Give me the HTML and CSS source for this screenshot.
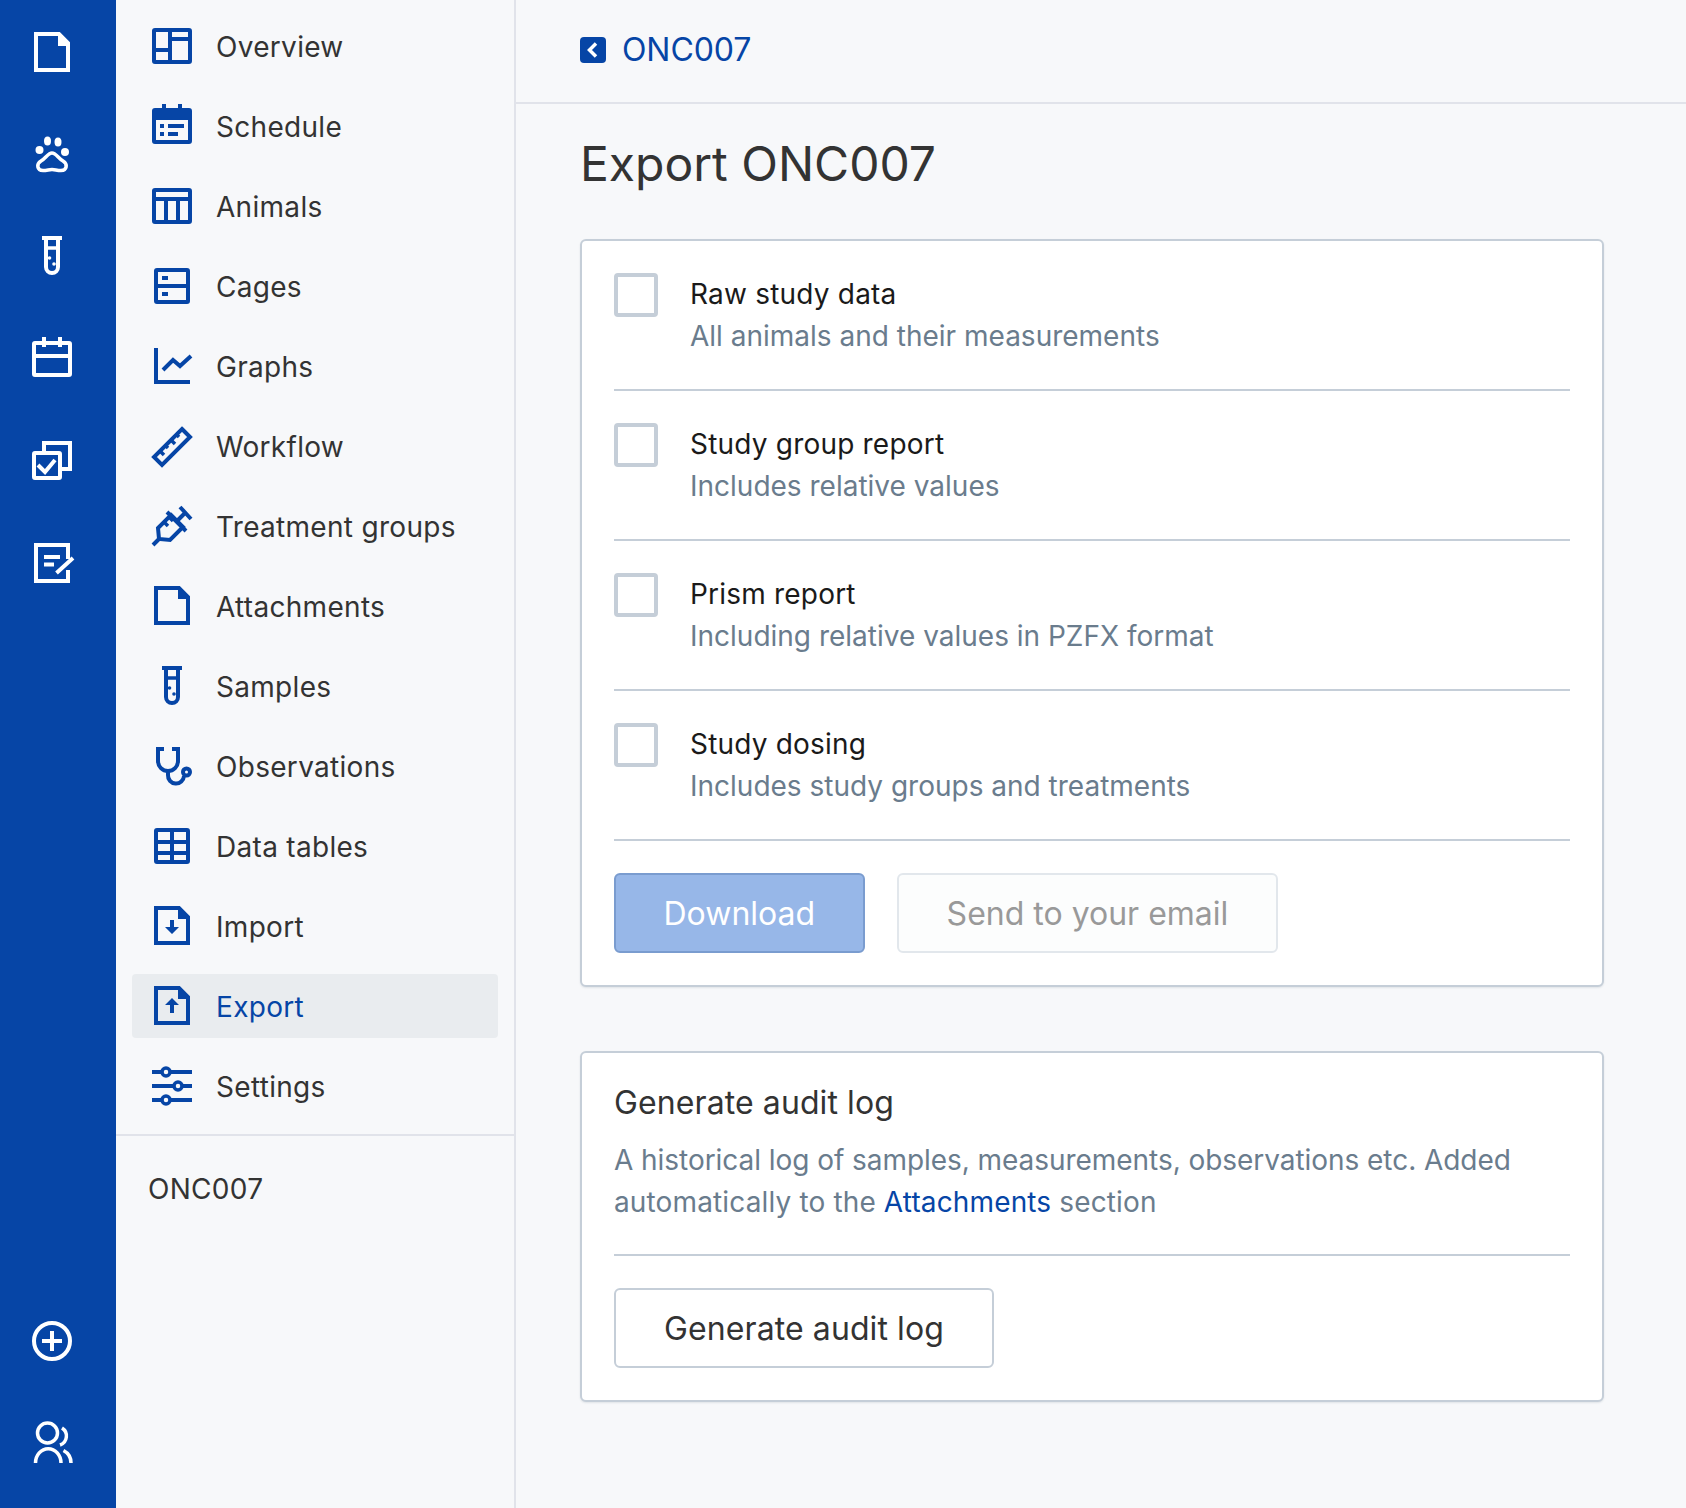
FILE: index.html
```html
<!DOCTYPE html>
<html lang="en">
  <head>
    <meta charset="UTF-8" />
    <meta name="viewport" content="width=device-width, initial-scale=1.0" />
    <title>Export ONC007</title>
    <link rel="stylesheet" href="styles.css">
  </head>
  <body>
    <div class="app">
      <aside class="rail">
        <div class="rail-group">
          <a class="rail-item"><svg class="icon" viewBox="0 0 44 44"><path d="M6 4H29L38 13V40H6Z"/><path class="solid" d="M28 4H30L38 13V16H28Z"/></svg></a>
          <a class="rail-item"><svg class="icon" viewBox="0 0 44 44"><circle class="solid" cx="9.5" cy="18" r="4"/><ellipse class="solid" cx="17.5" cy="9" rx="3.5" ry="4.5"/><ellipse class="solid" cx="28" cy="10" rx="3.5" ry="4.5"/><circle class="solid" cx="35" cy="20" r="4"/><path class="thin" d="M22 21C26 21 28 26 33 29C38 32 37 38.5 31 38.5C27 38.5 25 37.5 22 37.5C19 37.5 17 38.5 13 38.5C7 38.5 6 32 11 29C16 26 18 21 22 21Z"/></svg></a>
          <a class="rail-item"><svg class="icon" viewBox="0 0 44 44"><path d="M12 4H32"/><path d="M16 4V33A6 6 0 0 0 28 33V4"/><path class="thin" d="M16 14H28"/><circle class="solid" cx="19.5" cy="24" r="1.8"/><circle class="solid" cx="24" cy="30" r="1.8"/></svg></a>
          <a class="rail-item"><svg class="icon" viewBox="0 0 44 44"><rect x="4" y="7" width="36" height="32" rx="1"/><path d="M4 20H40M14 1V11M30 1V11"/></svg></a>
          <a class="rail-item"><svg class="icon" viewBox="0 0 44 44"><path d="M14 13V5H40V31H32"/><rect x="4" y="15" width="26" height="25" rx="1"/><path d="M8 27L15 34L25 22"/></svg></a>
          <a class="rail-item"><svg class="icon" viewBox="0 0 44 44"><path d="M38 19V5H6V41H38V30"/><path d="M14 17H30M14 24.500H24M26.500 33L43 18"/></svg></a>
        </div>
        <div class="rail-group">
          <a class="rail-item"><svg class="icon" viewBox="0 0 44 44"><circle cx="22" cy="22" r="18"/><path d="M12 22H32M22 12V32"/></svg></a>
          <a class="rail-item"><svg class="icon" viewBox="0 0 44 44"><circle class="thin" cx="17.500" cy="12" r="10"/><path class="thin" d="M5.500 42A12.500 14 0 0 1 31 42"/><path class="thin" d="M32 7A9.500 9.500 0 0 1 30 24"/><path class="thin" d="M33.500 29.500A14 14 0 0 1 41 42"/></svg></a>
        </div>
      </aside>

      <nav class="sidebar">
        <ul class="menu">
          <li class="menu-item"><svg class="icon" viewBox="0 0 44 44"><rect x="4" y="6" width="36" height="32" rx="1"/><path d="M20 6V38M4 26H20M20 15H40"/></svg><span>Overview</span></li>
          <li class="menu-item"><svg class="icon" viewBox="0 0 44 44"><rect x="4" y="6" width="36" height="32" rx="1"/><path class="solid" d="M4 5H40V16H4Z"/><path d="M14 0V6M30 0V6"/><path class="solid" d="M10 20H14V24H10ZM18 20H34V24H18ZM10 28H14V32H10ZM18 28H28V32H18Z"/></svg><span>Schedule</span></li>
          <li class="menu-item"><svg class="icon" viewBox="0 0 44 44"><rect x="4" y="6" width="36" height="32" rx="1"/><path d="M4 15H40M16 15V38M28 15V38"/></svg><span>Animals</span></li>
          <li class="menu-item"><svg class="icon" viewBox="0 0 44 44"><rect x="6" y="6" width="32" height="32" rx="1"/><path d="M6 22H38"/><path class="solid" d="M12 12H18V16H12ZM12 28H18V32H12Z"/></svg><span>Cages</span></li>
          <li class="menu-item"><svg class="icon" viewBox="0 0 44 44"><path d="M6 4V38H40"/><path d="M13 26L23 16L30 22L41 12"/></svg><span>Graphs</span></li>
          <li class="menu-item"><svg class="icon" viewBox="0 0 44 44"><path d="M32 5L40 13L12 41L4 33Z"/><path class="thin" d="M10 27L14 31M15.500 21.500L18 24M21 16L25 20M26.500 10.500L29 13"/></svg><span>Workflow</span></li>
          <li class="menu-item"><svg class="icon" viewBox="0 0 44 44"><path d="M21 11L33 23L20 36L9 35L8 24Z"/><path d="M17 8L36 27M27 17L36 8M30 3L41 15M3 41L10 34"/><path class="thin" d="M14 18L18 22M19 13L23 17"/></svg><span>Treatment groups</span></li>
          <li class="menu-item"><svg class="icon" viewBox="0 0 44 44"><path d="M6 4H29L38 13V39H6Z"/><path class="solid" d="M28 4H30L38 13V15H28Z"/></svg><span>Attachments</span></li>
          <li class="menu-item"><svg class="icon" viewBox="0 0 44 44"><path d="M12 4H32"/><path d="M16 4V33A6 6 0 0 0 28 33V4"/><path class="thin" d="M16 14H28"/><circle class="solid" cx="19.500" cy="24" r="1.800"/><circle class="solid" cx="24" cy="30" r="1.800"/></svg><span>Samples</span></li>
          <li class="menu-item"><svg class="icon" viewBox="0 0 44 44"><path d="M14 5H8V17A10 10 0 0 0 28 17V5H22"/><path d="M18 27V31A8 8 0 0 0 34 32"/><circle cx="36.500" cy="28" r="3.500"/></svg><span>Observations</span></li>
          <li class="menu-item"><svg class="icon" viewBox="0 0 44 44"><rect x="6" y="6" width="32" height="32" rx="1"/><path d="M6 18H38M6 29H38M22 6V38"/></svg><span>Data tables</span></li>
          <li class="menu-item"><svg class="icon" viewBox="0 0 44 44"><path d="M6 4H29L38 13V39H6Z"/><path class="solid" d="M28 4H30L38 13V15H28Z"/><path class="solid" d="M20 16H24V23H29L22 30L15 23H20Z"/></svg><span>Import</span></li>
          <li class="menu-item is-active"><svg class="icon" viewBox="0 0 44 44"><path d="M6 4H29L38 13V39H6Z"/><path class="solid" d="M28 4H30L38 13V15H28Z"/><path class="solid" d="M20 29H24V21H29L22 14L15 21H20Z"/></svg><span>Export</span></li>
          <li class="menu-item"><svg class="icon" viewBox="0 0 44 44"><path d="M2 8H42M2 22H42M2 36H42"/><circle class="knob" cx="16" cy="8" r="4"/><circle class="knob" cx="28" cy="22" r="4"/><circle class="knob" cx="16" cy="36" r="4"/></svg><span>Settings</span></li>
        </ul>
        <div class="project-name">ONC007</div>
      </nav>

      <div class="page">
        <header class="topbar">
          <a class="back-link"><svg class="back-icon" viewBox="0 0 26 26"><rect width="26" height="26" rx="4"/><path d="M16 6.500L9.500 13L16 19.500"/></svg>ONC007</a>
        </header>
        <main class="content">
          <h1>Export ONC007</h1>

          <section class="card">
            <label class="option">
              <span class="checkbox"></span>
              <span class="option-text"><strong>Raw study data</strong><small>All animals and their measurements</small></span>
            </label>
            <label class="option">
              <span class="checkbox"></span>
              <span class="option-text"><strong>Study group report</strong><small>Includes relative values</small></span>
            </label>
            <label class="option">
              <span class="checkbox"></span>
              <span class="option-text"><strong>Prism report</strong><small>Including relative values in PZFX format</small></span>
            </label>
            <label class="option">
              <span class="checkbox"></span>
              <span class="option-text"><strong>Study dosing</strong><small>Includes study groups and treatments</small></span>
            </label>
            <div class="actions">
              <button class="btn btn-primary">Download</button>
              <button class="btn btn-muted">Send to your email</button>
            </div>
          </section>

          <section class="card card-audit">
            <div class="audit-body">
              <h2>Generate audit log</h2>
              <p>A historical log of samples, measurements, observations etc. Added <span class="audit-tail">automatically to the <a>Attachments</a> section</span></p>
            </div>
            <div class="actions">
              <button class="btn btn-audit">Generate audit log</button>
            </div>
          </section>
        </main>
      </div>
    </div>
  </body>
</html>
```
FILE: styles.css
```css
* {
  margin: 0;
  padding: 0;
  box-sizing: border-box;
}
body {
  font-family: Inter, "Liberation Sans", sans-serif;
  background: #f7f8fa;
  color: #333;
}
.app {
  display: flex;
  min-height: 1508px;
}

.icon {
  width: 44px;
  height: 44px;
  flex: none;
  overflow: visible;
  fill: none;
  stroke: currentColor;
  stroke-width: 4;
}
.icon .thin {
  stroke-width: 3.5;
}
.icon .solid {
  fill: currentColor;
  stroke: none;
}
.icon .knob {
  fill: #f7f8fa;
  stroke-width: 3.5;
}

.rail {
  width: 116px;
  flex: none;
  padding: 1px 12px 14px 0;
  background: #0645a6;
  color: #fff;
  display: flex;
  flex-direction: column;
  justify-content: space-between;
  align-items: center;
}
.rail-item {
  display: flex;
  align-items: center;
  justify-content: center;
  height: 102px;
}

.sidebar {
  width: 400px;
  flex: none;
  border-right: 2px solid #e1e3ea;
}
.menu {
  list-style: none;
  padding: 14px 16px 0;
  border-bottom: 2px solid #e1e3ea;
}
.menu-item {
  display: flex;
  align-items: center;
  gap: 22px;
  height: 64px;
  margin-bottom: 16px;
  padding-left: 18px;
  border-radius: 4px;
  font-size: 28px;
  letter-spacing: 0.3px;
  color: #333;
}
.menu-item span {
  padding-top: 2px;
}
.menu-item .icon {
  color: #0645a6;
}
.menu-item.is-active {
  background: #e9ecef;
  color: #0645a6;
}
.project-name {
  padding: 36px 0 0 32px;
  font-size: 28px;
  letter-spacing: 0.3px;
  line-height: 35px;
}

.page {
  flex: 1;
  min-width: 0;
}
.topbar {
  height: 104px;
  padding: 0 0 3px 64px;
  display: flex;
  align-items: center;
  border-bottom: 2px solid #e1e3ea;
}
.back-link {
  display: flex;
  align-items: center;
  gap: 16px;
  font-size: 32px;
  letter-spacing: -0.1px;
  color: #0645a6;
}
.back-icon {
  width: 26px;
  height: 26px;
  fill: #0645a6;
}
.back-icon path {
  fill: none;
  stroke: #fff;
  stroke-width: 3.5;
}

.content {
  padding: 0 82px 0 64px;
}
h1 {
  font-weight: 400;
  font-size: 48px;
  line-height: 60px;
  padding-top: 30px;
  margin-bottom: 45px;
}

.card {
  background: #fff;
  border: 2px solid #c5ced8;
  border-radius: 6px;
  box-shadow: 0 1px 2px rgba(60, 80, 100, 0.12);
  padding: 0 32px 32px;
}
.card-audit {
  margin-top: 64px;
}
.option {
  display: flex;
  gap: 32px;
  height: 150px;
  padding-top: 32px;
  border-bottom: 2px solid #c5ced8;
}
.checkbox {
  width: 44px;
  height: 44px;
  flex: none;
  background: #fff;
  border: 4px solid #c5ced8;
  border-radius: 4px;
}
.option-text {
  display: flex;
  flex-direction: column;
  gap: 7px;
  padding-top: 4px;
}
.option-text strong {
  font-weight: 400;
  font-size: 28px;
  line-height: 35px;
  letter-spacing: 0.2px;
  color: #1a1a1a;
}
.option-text small {
  font-size: 28px;
  line-height: 35px;
  color: #6a7c8d;
}

.actions {
  display: flex;
  gap: 32px;
  padding-top: 32px;
}
.btn {
  height: 80px;
  padding: 0 48px;
  font-family: inherit;
  font-size: 32px;
  color: #333;
  background: #fff;
  border: 2px solid #c5ced8;
  border-radius: 6px;
}
.btn-primary {
  padding: 0 47.5px;
  color: #fff;
  background: #97b7e8;
  border-color: #7a9ccf;
}
.btn-muted {
  color: #999;
  background: #fcfdfd;
  border-color: #e2e7ec;
}
.btn-audit {
  letter-spacing: 0.1px;
}

.audit-body {
  height: 203px;
  padding-top: 30px;
  border-bottom: 2px solid #c5ced8;
}
.audit-body h2 {
  font-weight: 400;
  font-size: 32px;
  line-height: 40px;
  letter-spacing: 0.1px;
  margin-bottom: 16px;
}
.audit-body p {
  font-size: 28px;
  line-height: 42px;
  letter-spacing: -0.05px;
  color: #6a7c8d;
}
.audit-tail {
  display: block;
  letter-spacing: 0.14px;
}
.audit-body a {
  color: #0645a6;
}
```
